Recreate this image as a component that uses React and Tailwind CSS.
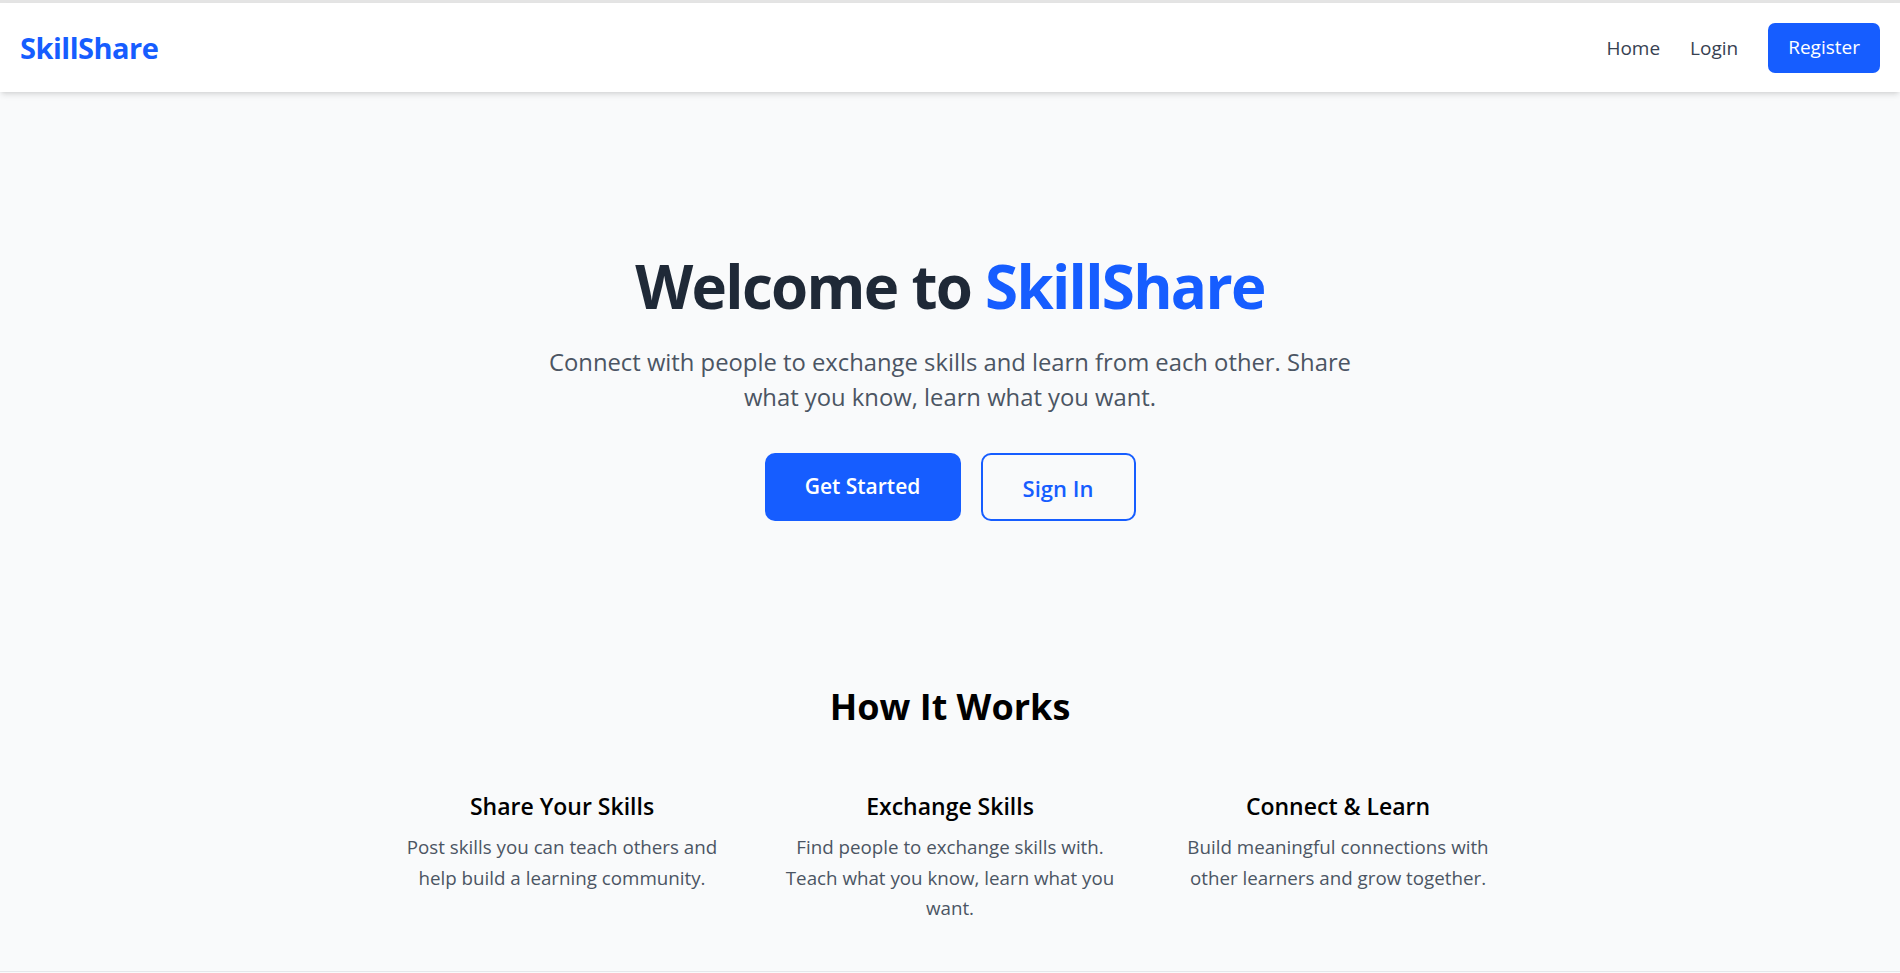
import React from "react";

const FEATURES = [
  {
    title: "Share Your Skills",
    text: "Post skills you can teach others and help build a learning community."
  },
  {
    title: "Exchange Skills",
    text: "Find people to exchange skills with. Teach what you know, learn what you want."
  },
  {
    title: "Connect & Learn",
    text: "Build meaningful connections with other learners and grow together."
  }
];

export default function App() {
  return (
    <div className="min-h-screen bg-[#f9fafb] font-['Open_Sans',sans-serif]">
      <div className="h-[3px] bg-[#e4e4e4]" />

      {/* Navbar */}
      <nav className="bg-white shadow-md h-[89px] px-5 flex items-center justify-between">
        <a href="#" className="text-[29px] font-bold text-[#165dff] tracking-[-0.5px]">SkillShare</a>
        <div className="flex items-center gap-[30px]">
          <a href="#" className="text-[19px] text-[#374151] pt-[2px]">Home</a>
          <a href="#" className="text-[19px] text-[#374151] pt-[2px]">Login</a>
          <a href="#" className="h-[50px] px-5 flex items-center rounded-[7px] bg-[#165dff] text-white text-[19px]">
            Register
          </a>
        </div>
      </nav>

      {/* Hero */}
      <section className="pt-[164px] flex flex-col items-center text-center">
        <h1 className="text-[60px] leading-none font-bold text-[#1f2937] tracking-[-1.7px]">
          Welcome to <span className="text-[#165dff]">SkillShare</span>
        </h1>
        <p className="mt-[29px] max-w-[840px] text-[23.8px] leading-[35px] text-[#4b5563]">
          Connect with people to exchange skills and learn from each other. Share what you know, learn what you want.
        </p>
        <div className="mt-[38px] flex gap-5">
          <button className="h-[68px] w-[196px] rounded-[10px] bg-[#165dff] text-white text-[21px] font-semibold">
            Get Started
          </button>
          <button className="h-[68px] w-[155px] rounded-[10px] border-[2.5px] border-[#165dff] text-[#165dff] text-[22px] font-semibold pt-[3px]">
            Sign In
          </button>
        </div>
      </section>

      {/* How it works */}
      <section className="pt-[163px] pb-[47px]">
        <h2 className="text-center text-[36px] leading-[45px] font-bold text-black">How It Works</h2>
        <div className="mt-[60px] mx-auto w-[1120px] grid grid-cols-3 gap-[44px] text-center">
          {FEATURES.map(f => (
            <div key={f.title}>
              <h3 className="text-[23px] leading-[35px] font-semibold text-black">{f.title}</h3>
              <p className="mt-2 text-[18.75px] leading-[30.5px] text-[#4b5563]">{f.text}</p>
            </div>
          ))}
        </div>
      </section>

      <footer className="border-t border-gray-200 h-[120px]" />
    </div>
  );
}
